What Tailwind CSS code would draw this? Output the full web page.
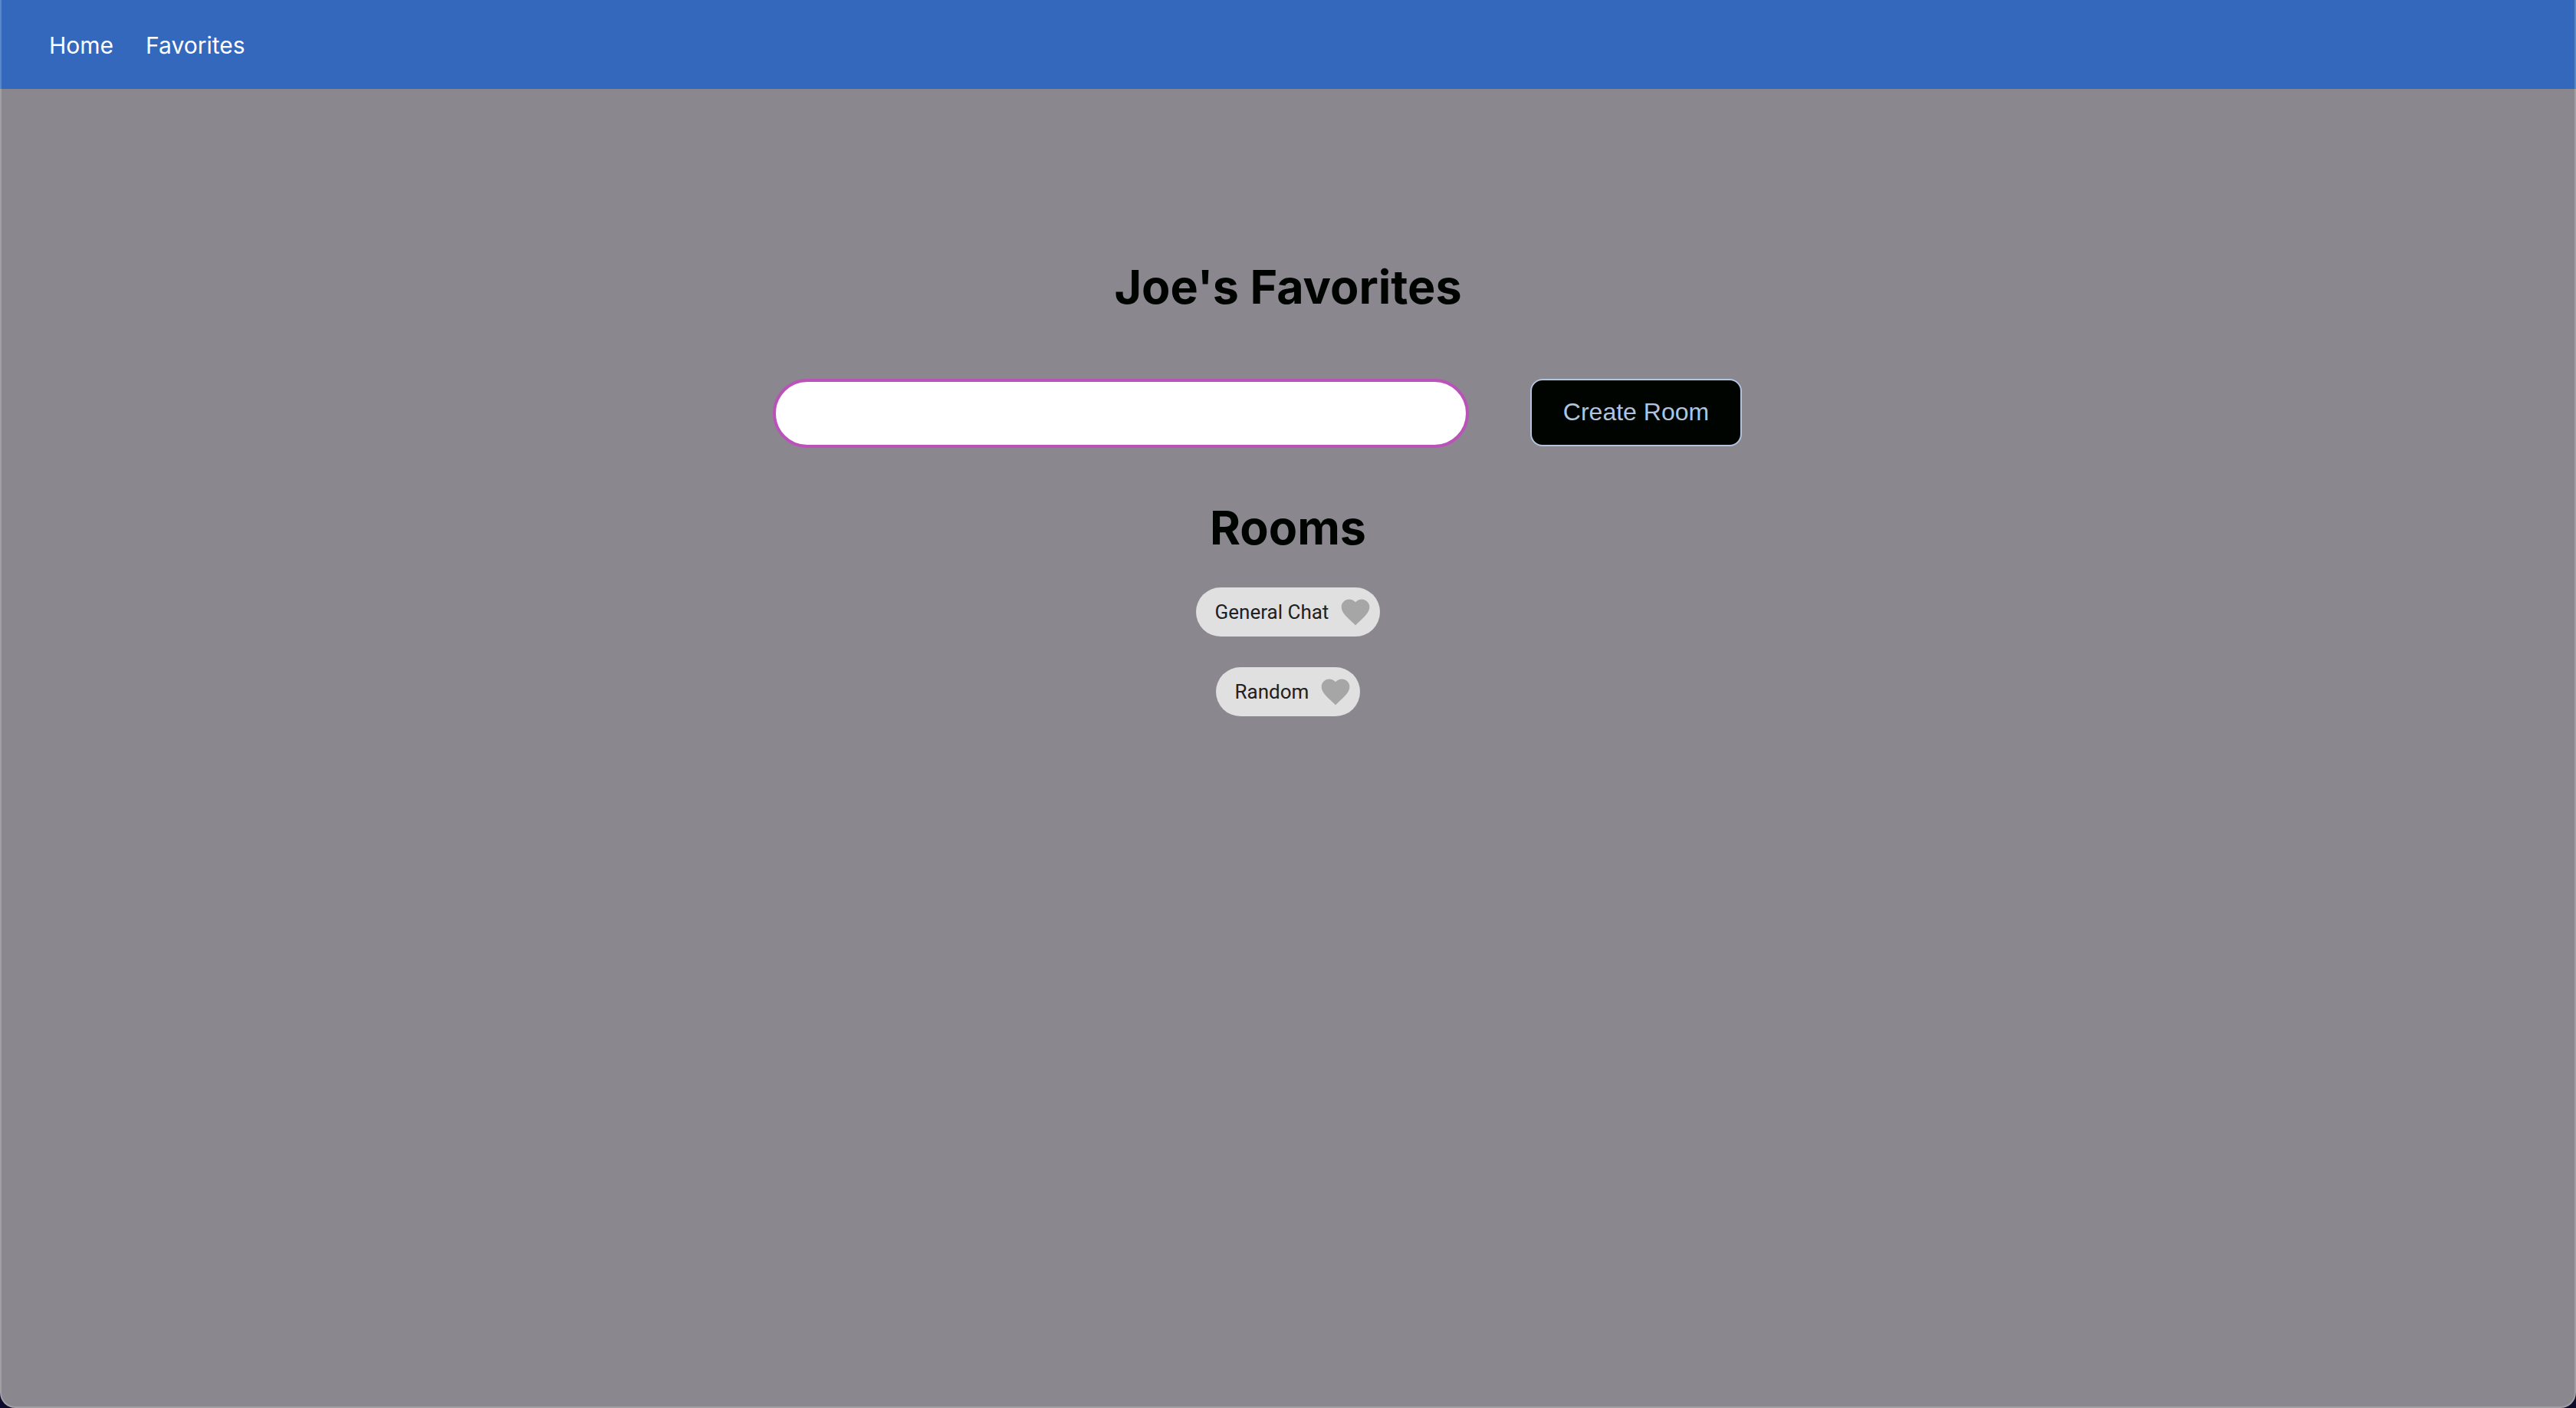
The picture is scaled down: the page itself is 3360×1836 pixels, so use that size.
<!DOCTYPE html>
<html lang="en">
<head>
<meta charset="utf-8">
<title>Joe's Favorites</title>
<script src="https://cdn.jsdelivr.net/npm/@tailwindcss/browser@4"></script>
</head>
<body class="bg-[#0c0b2c] font-['Inter',sans-serif]">
<div class="relative flex min-h-screen flex-col overflow-hidden rounded-b-[20px] bg-[#8b878f]">
  <nav class="flex h-[116px] items-center gap-[42px] bg-[#3368bd] px-16 pt-[2px] text-[30px] text-white">
    <a href="#home">Home</a>
    <a href="#favorites">Favorites</a>
  </nav>
  <main class="flex flex-col items-center pt-[218px] text-[#000400]">
    <h1 class="text-[61px] leading-20 font-bold">Joe's Favorites</h1>
    <form class="mt-20 mr-20 flex items-start gap-20">
      <input type="text" aria-label="Room name" class="h-[90px] w-[908px] rounded-full border-4 border-[#bb52b9] bg-white px-10 font-['Liberation_Sans',sans-serif] text-[32px] outline-none">
      <button type="button" class="h-[88px] w-[276px] rounded-2xl border-2 border-[#b0c4de] bg-[#000400] pb-[2px] font-['Liberation_Sans',sans-serif] text-[32px] text-[#b0c4de]">Create Room</button>
    </form>
    <h2 class="mt-16 text-[61px] leading-20 font-bold">Rooms</h2>
    <ul class="mt-[38px] flex flex-col items-center gap-10 font-['Roboto',sans-serif] text-[26px] text-[#212121]">
      <li class="flex h-16 items-center gap-[13px] rounded-full bg-[#e0e0e0] pr-[10px] pl-[25px]">
        <a href="#general-chat">General Chat</a>
        <button type="button" aria-label="Favorite General Chat" class="text-[#a6a6a6]">
          <svg class="size-11" viewBox="0 0 24 24" fill="currentColor"><path d="M12 21.35l-1.45-1.32C5.4 15.36 2 12.28 2 8.5 2 5.42 4.42 3 7.5 3c1.74 0 3.41.81 4.5 2.09C13.09 3.81 14.76 3 16.5 3 19.58 3 22 5.42 22 8.5c0 3.78-3.4 6.86-8.55 11.54L12 21.35z"/></svg>
        </button>
      </li>
      <li class="flex h-16 items-center gap-[13px] rounded-full bg-[#e0e0e0] pr-[10px] pl-[25px]">
        <a href="#random">Random</a>
        <button type="button" aria-label="Favorite Random" class="text-[#a6a6a6]">
          <svg class="size-11" viewBox="0 0 24 24" fill="currentColor"><path d="M12 21.35l-1.45-1.32C5.4 15.36 2 12.28 2 8.5 2 5.42 4.42 3 7.5 3c1.74 0 3.41.81 4.5 2.09C13.09 3.81 14.76 3 16.5 3 19.58 3 22 5.42 22 8.5c0 3.78-3.4 6.86-8.55 11.54L12 21.35z"/></svg>
        </button>
      </li>
    </ul>
  </main>
  <div class="pointer-events-none absolute inset-0 rounded-b-[20px] border-x-2 border-b-2 border-white/20"></div>
</div>
</body>
</html>
